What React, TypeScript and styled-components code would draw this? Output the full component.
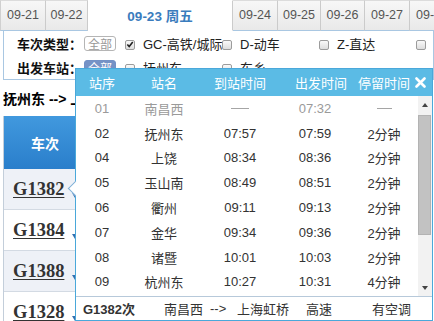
import React from 'react';
import styled, { createGlobalStyle } from 'styled-components';

const GlobalStyle = createGlobalStyle`
  html, body {
    margin: 0;
    padding: 0;
    background: #fff;
    overflow: hidden;
  }
  body {
    font-family: "Liberation Sans", "Noto Sans CJK SC", sans-serif;
    color: #333;
  }
`;

const tabs = [
  { label: '09-21', w: 46 },
  { label: '09-22', w: 42 },
  { label: '09-23 周五', w: 145, active: true },
  { label: '09-24', w: 45 },
  { label: '09-25', w: 43 },
  { label: '09-26', w: 44 },
  { label: '09-27', w: 45 },
  { label: '09-28', w: 45 },
];

const stops = [
  ['01', '南昌西', '', '07:32', ''],
  ['02', '抚州东', '07:57', '07:59', '2分钟'],
  ['04', '上饶', '08:34', '08:36', '2分钟'],
  ['05', '玉山南', '08:49', '08:51', '2分钟'],
  ['06', '衢州', '09:11', '09:13', '2分钟'],
  ['07', '金华', '09:34', '09:36', '2分钟'],
  ['08', '诸暨', '10:01', '10:03', '2分钟'],
  ['09', '杭州东', '10:27', '10:31', '4分钟'],
];

const trains = ['G1382', 'G1384', 'G1388', 'G1328'];

const Checkbox = ({ checked }: { checked?: boolean }) => (
  <Box>
    {checked && (
      <svg width="9" height="9" viewBox="0 0 9 9">
        <path d="M1.5 4.5 L3.6 6.8 L7.6 1.8" fill="none" stroke="#222" strokeWidth="1.8" />
      </svg>
    )}
  </Box>
);

const Option = ({ label, checked, $color }: { label: string; checked?: boolean; $color?: string }) => (
  <OptionWrap $color={$color}>
    <Checkbox checked={checked} />
    <span>{label}</span>
  </OptionWrap>
);

const App = () => {
  return (
    <Page>
      <GlobalStyle />
      <TabBar>
        {tabs.map((t) => (
          <Tab key={t.label} $w={t.w} $active={!!t.active}>
            {t.label}
          </Tab>
        ))}
      </TabBar>

      <FilterPanel>
        <FilterRow>
          <FilterLabel>车次类型：</FilterLabel>
          <AllButton>全部</AllButton>
          <Option label="GC-高铁/城际" checked />
          <Option label="D-动车" />
          <Option label="Z-直达" />
          <Option label="T-特快" $color="#8a1a6a" />
        </FilterRow>
        <FilterRow>
          <FilterLabel>出发车站：</FilterLabel>
          <AllButton $active>全部</AllButton>
          <Option label="抚州东" />
          <Option label="东乡" />
        </FilterRow>
      </FilterPanel>

      <RouteTitle>抚州东 --&gt; 上海虹桥</RouteTitle>

      <TrainTable>
        <TrainHead>车次</TrainHead>
        {trains.map((t, i) => (
          <TrainRow key={t} $alt={i % 2 === 0}>
            <TrainCode>{t}</TrainCode>
            <svg width="6" height="5" viewBox="0 0 6 5">
              <path d="M0 0 L6 0 L3 5 Z" fill="#3470b0" />
            </svg>
          </TrainRow>
        ))}
      </TrainTable>

      <Popup>
        <Pointer />
        <PopHead>
          <HeadCell>站序</HeadCell>
          <HeadCell>站名</HeadCell>
          <HeadCell>到站时间</HeadCell>
          <HeadCell $shift={12}>出发时间</HeadCell>
          <HeadCell>停留时间</HeadCell>
          <CloseCell>
            <svg width="11" height="11" viewBox="0 0 11 11">
              <path d="M1.5 1.5 L9.5 9.5 M9.5 1.5 L1.5 9.5" stroke="#fff" strokeWidth="2.6" strokeLinecap="round" />
            </svg>
          </CloseCell>
        </PopHead>

        <PopBody>
          <StopList>
            {stops.map((s, i) => (
              <StopRow key={s[0]} $muted={i === 0}>
                <Cell>{s[0]}</Cell>
                <Cell>{s[1]}</Cell>
                <Cell>{s[2] || <Dash $w={18} />}</Cell>
                <Cell>{s[3]}</Cell>
                <Cell>{s[4] || <Dash $w={15} />}</Cell>
              </StopRow>
            ))}
          </StopList>
          <ScrollBar>
            <ScrollArrow>
              <svg width="6" height="4" viewBox="0 0 6 4">
                <path d="M0 4 L3 0 L6 4 Z" fill="#444" />
              </svg>
            </ScrollArrow>
            <Thumb />
            <ScrollTrack />
            <ScrollArrow>
              <svg width="6" height="4" viewBox="0 0 6 4">
                <path d="M0 0 L6 0 L3 4 Z" fill="#444" />
              </svg>
            </ScrollArrow>
          </ScrollBar>
        </PopBody>

        <PopFoot>
          <FootCode>G1382次</FootCode>
          <span>南昌西</span>
          <span>--&gt;</span>
          <span>上海虹桥</span>
          <span>高速</span>
          <span>有空调</span>
        </PopFoot>
      </Popup>
    </Page>
  );
};

export default App;

const Page = styled.div`
  position: relative;
  width: 434px;
  height: 321px;
  overflow: hidden;
`;

const TabBar = styled.div`
  display: flex;
  height: 31px;
  white-space: nowrap;
`;

const Tab = styled.div<{ $w: number; $active: boolean }>`
  flex-shrink: 0;
  box-sizing: border-box;
  width: ${(p) => p.$w}px;
  height: 31px;
  display: flex;
  align-items: center;
  justify-content: center;
  border-right: 1px solid #cbcbcb;
  border-top: 1px solid ${(p) => (p.$active ? '#fff' : '#dcdcdc')};
  border-bottom: 1px solid ${(p) => (p.$active ? '#fff' : '#a9c7e2')};
  background: ${(p) => (p.$active ? '#fff' : 'linear-gradient(#f7f7f7, #e9e9e9)')};
  color: ${(p) => (p.$active ? '#3a7cbd' : '#555')};
  font-size: ${(p) => (p.$active ? '13.5px' : '12.5px')};
  font-weight: ${(p) => (p.$active ? 'bold' : 'normal')};
  padding-bottom: 1px;
  &:first-child {
    border-left: 1px solid #d0d0d0;
  }
`;

const FilterPanel = styled.div`
  margin-left: 3px;
  border: 1px solid #a9c7e2;
  border-top: none;
  height: 48px;
`;

const FilterRow = styled.div`
  display: flex;
  align-items: center;
  height: 24px;
  padding-left: 13px;
  font-size: 13px;
  white-space: nowrap;
`;

const FilterLabel = styled.span`
  width: 67px;
  flex-shrink: 0;
  font-weight: bold;
  color: #111;
`;

const AllButton = styled.span<{ $active?: boolean }>`
  box-sizing: border-box;
  width: 32px;
  height: 15px;
  flex-shrink: 0;
  margin-right: 9px;
  display: flex;
  align-items: center;
  justify-content: center;
  font-size: 12px;
  border-radius: 3px;
  border: 1px solid ${(p) => (p.$active ? '#7391c6' : '#b5b5b5')};
  background: ${(p) => (p.$active ? '#7592c6' : '#fff')};
  color: ${(p) => (p.$active ? '#fff' : '#999')};
`;

const OptionWrap = styled.span<{ $color?: string }>`
  width: 97px;
  flex-shrink: 0;
  display: flex;
  align-items: center;
  gap: 8px;
  color: ${(p) => p.$color || '#222'};
`;

const Box = styled.span`
  box-sizing: border-box;
  width: 10px;
  height: 10px;
  margin-top: 3px;
  flex-shrink: 0;
  display: flex;
  align-items: center;
  justify-content: center;
  border: 1px solid #9c9c9c;
  border-radius: 2px;
  background: linear-gradient(#fafafa, #dedede);
`;

const RouteTitle = styled.div`
  height: 24px;
  line-height: 24px;
  margin-top: 7px;
  padding-left: 3px;
  font-size: 14px;
  font-weight: bold;
  color: #000;
  white-space: nowrap;
`;

const TrainTable = styled.div`
  margin: 5px 0 0 3px;
  width: 110px;
  border-left: 1px solid #c3ceda;
`;

const TrainHead = styled.div`
  height: 53px;
  padding-right: 28px;
  display: flex;
  align-items: center;
  justify-content: center;
  background: linear-gradient(#4199de, #2a7ecb);
  color: #fff;
  font-size: 14px;
  font-weight: bold;
`;

const TrainRow = styled.div<{ $alt: boolean }>`
  box-sizing: border-box;
  height: 41px;
  display: flex;
  align-items: center;
  gap: 8px;
  padding-left: 9px;
  background: ${(p) => (p.$alt ? '#eef1f7' : '#fff')};
  border-bottom: 1px solid #d3dae3;
  svg {
    margin-top: 12px;
  }
`;

const TrainCode = styled.span`
  font-family: "Liberation Serif", "DejaVu Serif", serif;
  font-size: 18.5px;
  font-weight: bold;
  color: #333;
  text-decoration: underline;
  text-underline-offset: 2px;
`;

const Popup = styled.div`
  position: absolute;
  left: 75px;
  top: 68px;
  width: 358px;
  height: 253px;
  box-sizing: border-box;
  border: 1px solid #4aa8da;
  background: #fff;
  display: flex;
  flex-direction: column;
`;

const Pointer = styled.div`
  position: absolute;
  left: -6px;
  top: 114px;
  width: 10px;
  height: 10px;
  background: #fff;
  border-left: 1px solid #7fb0d8;
  border-bottom: 1px solid #7fb0d8;
  transform: rotate(45deg);
`;

const columns = '52px 72px 80px 70px 68px 14px';

const PopHead = styled.div`
  height: 27px;
  flex-shrink: 0;
  display: grid;
  grid-template-columns: ${columns};
  align-items: center;
  background: #5bbbe5;
  color: #fff;
  font-size: 13px;
`;

const HeadCell = styled.span<{ $shift?: number }>`
  text-align: center;
  padding-left: ${(p) => p.$shift || 0}px;
  white-space: nowrap;
`;

const CloseCell = styled.span`
  display: flex;
  align-items: center;
  margin-left: -3px;
`;

const PopBody = styled.div`
  flex: 1;
  display: flex;
  min-height: 0;
`;

const StopList = styled.div`
  flex: 1;
  display: grid;
  grid-template-columns: 52px 72px 80px 70px 68px;
  grid-auto-rows: 24.8px;
  align-content: start;
`;

const StopRow = styled.div<{ $muted: boolean }>`
  display: contents;
  color: ${(p) => (p.$muted ? '#9a9a9a' : '#333')};
  font-size: 13px;
`;

const Cell = styled.span`
  display: flex;
  align-items: center;
  justify-content: center;
  white-space: nowrap;
`;

const Dash = styled.span<{ $w: number }>`
  display: inline-block;
  width: ${(p) => p.$w}px;
  height: 1px;
  background: #a5a5a5;
`;

const ScrollBar = styled.div`
  width: 14px;
  display: flex;
  flex-direction: column;
  background: #f2f2f2;
`;

const ScrollArrow = styled.div`
  height: 17px;
  display: flex;
  align-items: center;
  justify-content: center;
`;

const Thumb = styled.div`
  height: 120px;
  margin: 2px 1px 0 0;
  background: #c2c2c2;
  border: 1px solid #b3b3b3;
  box-sizing: border-box;
`;

const ScrollTrack = styled.div`
  flex: 1;
`;

const PopFoot = styled.div`
  height: 23px;
  flex-shrink: 0;
  border-top: 1px solid #b7c9da;
  display: grid;
  grid-template-columns: 81px 46px 27px 69px 66px 1fr;
  align-items: center;
  padding-left: 7px;
  font-size: 13px;
  color: #333;
  white-space: nowrap;
`;

const FootCode = styled.span`
  font-weight: bold;
`;
